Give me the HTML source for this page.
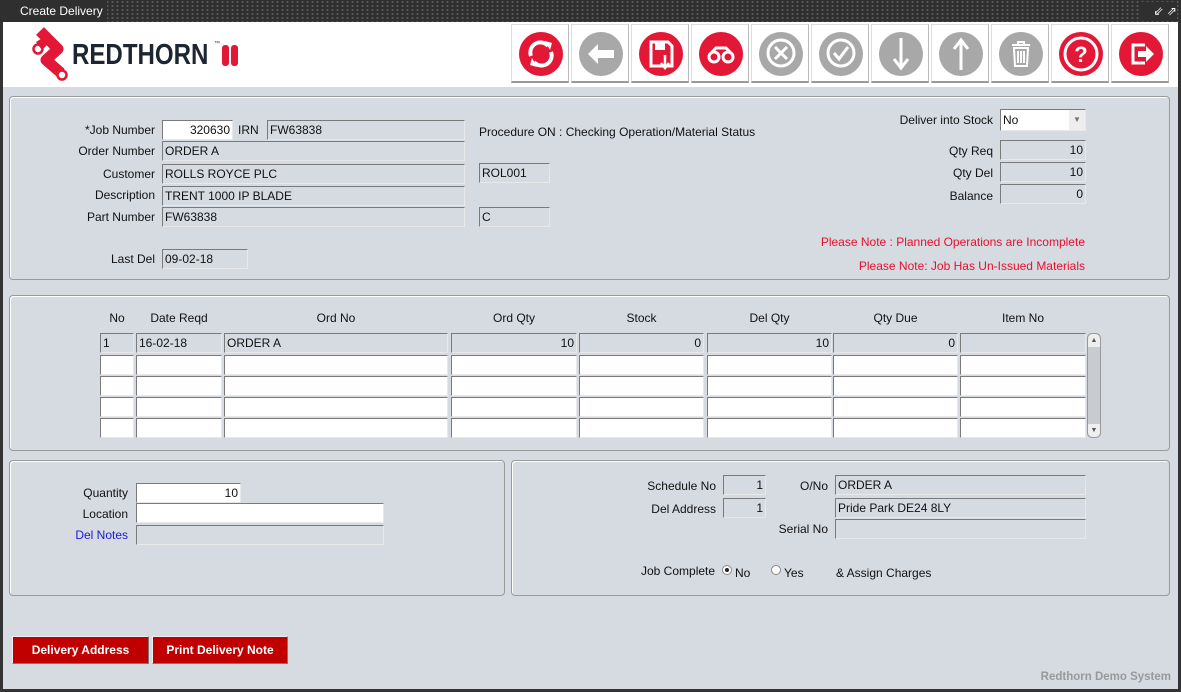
<!DOCTYPE html>
<html><head><meta charset="utf-8">
<style>
*{box-sizing:border-box;margin:0;padding:0}
body{width:1181px;height:692px;overflow:hidden;background:#333;font-family:"Liberation Sans",Arial,sans-serif;font-size:12px;color:#111;position:relative}
#title{position:absolute;left:0;top:0;width:1181px;height:22px;background:#2f2f2f;background-image:radial-gradient(#777 0.8px,transparent 1px);background-size:5px 4px}
#title .t{position:absolute;left:0;top:0;height:22px;background:#2f2f2f;color:#fff;font-size:12px;line-height:22px;padding:0 4px 0 20px}
#title .F{position:absolute;left:3px;top:1px;color:#e0102e;font-size:17px;font-weight:bold;line-height:20px}
#win{position:absolute;left:3px;top:22px;width:1175px;height:667px;background:#d6dae1}
#tb{position:absolute;left:3px;top:22px;width:1175px;height:65px;background:#fff}
.btn{position:absolute;top:24px;width:58px;height:59px;border:1px solid #ddd;border-bottom:2px solid #999;border-right:1px solid #bbb;background:#fff}
.btn svg{position:absolute;left:6px;top:6px}
.p{position:absolute;border:1px solid #9a9a9a;border-radius:4px;box-shadow:1px 1px 0 #fff inset}
.l{position:absolute;white-space:nowrap;text-align:right}
.f{position:absolute;height:20px;background:#d6dae1;border:1px solid;border-color:#7a7a7a #e8e8e8 #e8e8e8 #7a7a7a;padding:0 2px;line-height:18px;white-space:nowrap;overflow:hidden}
.w{background:#fff}
.r{text-align:right}
.h{position:absolute;text-align:center;top:311px}
.red{color:#e8102e}
.rb{position:absolute;top:636px;height:28px;background:#c00000;color:#fff;font-weight:bold;text-align:center;line-height:27px;border:1px solid #eee;border-right-color:#777;border-bottom-color:#777}
</style></head><body>
<div id="title"><span class="F">F</span><span class="t">Create Delivery</span>
<span style="position:absolute;right:4px;top:2px;width:36px;height:18px;background:#2f2f2f;color:#fff;font-size:12px;line-height:18px;text-align:right">⇙ ⇗</span></div>
<div id="win"></div>
<div id="tb"></div>
<!-- logo -->
<svg style="position:absolute;left:0;top:0" width="80" height="90" viewBox="0 0 80 90">
<polyline points="40,31 58,49 46,60 61,73" fill="none" stroke="#e31837" stroke-width="11" stroke-linejoin="round"/>
<circle cx="38" cy="49" r="4.5" fill="#fff" stroke="#e31837" stroke-width="2.5"/>
<path d="M36 42 L44 37 L48 44 L42 50 Z" fill="#e31837"/>
<circle cx="62" cy="75" r="4.5" fill="#fff" stroke="#e31837" stroke-width="2.5"/>
</svg>
<div style="position:absolute;left:72px;top:40px;font-size:29px;font-weight:bold;color:#1d2530;line-height:30px;transform:scaleX(0.83);transform-origin:left">REDTHORN</div>
<div style="position:absolute;left:214px;top:41px;font-size:6px;color:#333">™</div>
<div style="position:absolute;left:222px;top:45px;width:7px;height:21px;background:#e31837;border-radius:3px"></div>
<div style="position:absolute;left:231px;top:45px;width:7px;height:21px;background:#e31837;border-radius:3px"></div>

<!-- toolbar buttons -->
<div class="btn" style="left:511px"><svg width="46" height="46" viewBox="0 0 46 46"><circle cx="23" cy="23" r="22" fill="#e31837"/><path d="M13 25a10 10 0 0 1 17-10" fill="none" stroke="#fff" stroke-width="4"/><path d="M33 21a10 10 0 0 1-17 10" fill="none" stroke="#fff" stroke-width="4"/><path d="M27 10l7 2-2 7z M19 36l-7-2 2-7z" fill="#fff"/></svg></div>
<div class="btn" style="left:571px"><svg width="46" height="46" viewBox="0 0 46 46"><circle cx="23" cy="23" r="22" fill="#a8a8a8"/><path d="M10 23l10-10v6h16v8H20v6z" fill="#fff"/></svg></div>
<div class="btn" style="left:631px"><svg width="46" height="46" viewBox="0 0 46 46"><circle cx="23" cy="23" r="22" fill="#e31837"/><path d="M13 11h17l4 4v20H13z" fill="none" stroke="#fff" stroke-width="3"/><rect x="17" y="12" width="10" height="7" fill="#fff"/><path d="M27 24v12M23 32l4 5 4-5" stroke="#fff" stroke-width="2.5" fill="none"/></svg></div>
<div class="btn" style="left:691px"><svg width="46" height="46" viewBox="0 0 46 46"><circle cx="23" cy="23" r="22" fill="#e31837"/><circle cx="16" cy="26" r="5" fill="none" stroke="#fff" stroke-width="3"/><circle cx="30" cy="26" r="5" fill="none" stroke="#fff" stroke-width="3"/><path d="M14 21l4-4h10l4 4" fill="none" stroke="#fff" stroke-width="3"/></svg></div>
<div class="btn" style="left:751px"><svg width="46" height="46" viewBox="0 0 46 46"><circle cx="23" cy="23" r="22" fill="#a8a8a8"/><circle cx="23" cy="22" r="13" fill="none" stroke="#fff" stroke-width="3"/><path d="M17 16l12 12M29 16L17 28" stroke="#fff" stroke-width="3"/></svg></div>
<div class="btn" style="left:811px"><svg width="46" height="46" viewBox="0 0 46 46"><circle cx="23" cy="23" r="22" fill="#a8a8a8"/><circle cx="23" cy="22" r="13" fill="none" stroke="#fff" stroke-width="3"/><path d="M16 22l5 6 9-12" fill="none" stroke="#fff" stroke-width="3"/></svg></div>
<div class="btn" style="left:871px"><svg width="46" height="46" viewBox="0 0 46 46"><circle cx="23" cy="23" r="22" fill="#a8a8a8"/><path d="M23 7v28M16 28l7 9 7-9" fill="none" stroke="#fff" stroke-width="3"/></svg></div>
<div class="btn" style="left:931px"><svg width="46" height="46" viewBox="0 0 46 46"><circle cx="23" cy="23" r="22" fill="#a8a8a8"/><path d="M23 39V11M16 18l7-9 7 9" fill="none" stroke="#fff" stroke-width="3"/></svg></div>
<div class="btn" style="left:991px"><svg width="46" height="46" viewBox="0 0 46 46"><circle cx="23" cy="23" r="22" fill="#a8a8a8"/><path d="M14 14h18M20 14v-3h6v3M16 17l1 18h12l1-18z M20 20v12M23 20v12M26 20v12" fill="none" stroke="#fff" stroke-width="2"/></svg></div>
<div class="btn" style="left:1051px"><svg width="46" height="46" viewBox="0 0 46 46"><circle cx="23" cy="23" r="22" fill="#e31837"/><circle cx="23" cy="23" r="16" fill="none" stroke="#fff" stroke-width="3"/><text x="23" y="31" text-anchor="middle" fill="#fff" font-size="22" font-weight="bold" font-family="Liberation Sans">?</text></svg></div>
<div class="btn" style="left:1111px"><svg width="46" height="46" viewBox="0 0 46 46"><circle cx="23" cy="23" r="22" fill="#e31837"/><path d="M27 14h-12v18h12" fill="none" stroke="#fff" stroke-width="3"/><path d="M20 20h8v-5l8 8-8 8v-5h-8z" fill="#fff"/></svg></div>

<!-- panels -->
<div class="p" style="left:9px;top:96px;width:1161px;height:184px"></div>
<div class="p" style="left:9px;top:295px;width:1161px;height:156px"></div>
<div class="p" style="left:9px;top:460px;width:496px;height:136px"></div>
<div class="p" style="left:511px;top:460px;width:659px;height:136px"></div>

<!-- panel 1 -->
<div class="l" style="right:1026px;top:123px">*Job Number</div>
<div class="f w r" style="left:162px;top:120px;width:71px">320630</div>
<div class="l" style="left:238px;top:123px">IRN</div>
<div class="f" style="left:267px;top:120px;width:198px">FW63838</div>
<div class="l" style="left:479px;top:125px">Procedure ON : Checking Operation/Material Status</div>
<div class="l" style="right:1026px;top:144px">Order Number</div>
<div class="f" style="left:162px;top:141px;width:303px">ORDER A</div>
<div class="l" style="right:1026px;top:167px">Customer</div>
<div class="f" style="left:162px;top:164px;width:303px">ROLLS ROYCE PLC</div>
<div class="f" style="left:479px;top:163px;width:71px">ROL001</div>
<div class="l" style="right:1026px;top:188px">Description</div>
<div class="f" style="left:162px;top:186px;width:303px">TRENT 1000 IP BLADE</div>
<div class="l" style="right:1026px;top:210px">Part Number</div>
<div class="f" style="left:162px;top:207px;width:303px">FW63838</div>
<div class="f" style="left:479px;top:207px;width:71px">C</div>
<div class="l" style="right:1026px;top:252px">Last Del</div>
<div class="f" style="left:162px;top:249px;width:86px">09-02-18</div>

<div class="l" style="right:188px;top:113px">Deliver into Stock</div>
<div class="f w" style="left:1000px;top:109px;width:86px;height:22px;line-height:20px">No<span style="position:absolute;right:0;top:0;width:16px;height:20px;background:#eee;color:#777;font-size:8px;text-align:center">▼</span></div>
<div class="l" style="right:188px;top:144px">Qty Req</div>
<div class="f r" style="left:1000px;top:140px;width:86px">10</div>
<div class="l" style="right:188px;top:166px">Qty Del</div>
<div class="f r" style="left:1000px;top:162px;width:86px">10</div>
<div class="l" style="right:188px;top:189px">Balance</div>
<div class="f r" style="left:1000px;top:184px;width:86px">0</div>
<div class="l red" style="right:96px;top:235px">Please Note : Planned Operations are Incomplete</div>
<div class="l red" style="right:96px;top:259px">Please Note: Job Has Un-Issued Materials</div>

<!-- table -->
<div class="h" style="left:100px;width:34px">No</div>
<div class="h" style="left:136px;width:86px">Date Reqd</div>
<div class="h" style="left:224px;width:224px">Ord No</div>
<div class="h" style="left:451px;width:126px">Ord Qty</div>
<div class="h" style="left:579px;width:125px">Stock</div>
<div class="h" style="left:707px;width:125px">Del Qty</div>
<div class="h" style="left:833px;width:125px">Qty Due</div>
<div class="h" style="left:960px;width:126px">Item No</div>

<div class="f" style="left:100px;top:333px;width:34px">1</div>
<div class="f" style="left:136px;top:333px;width:86px">16-02-18</div>
<div class="f" style="left:224px;top:333px;width:224px">ORDER A</div>
<div class="f r" style="left:451px;top:333px;width:126px">10</div>
<div class="f r" style="left:579px;top:333px;width:125px">0</div>
<div class="f r" style="left:707px;top:333px;width:125px">10</div>
<div class="f r" style="left:833px;top:333px;width:125px">0</div>
<div class="f" style="left:960px;top:333px;width:126px"></div>

<div class="f w" style="left:100px;top:355px;width:34px"></div><div class="f w" style="left:136px;top:355px;width:86px"></div><div class="f w" style="left:224px;top:355px;width:224px"></div><div class="f w" style="left:451px;top:355px;width:126px"></div><div class="f w" style="left:579px;top:355px;width:125px"></div><div class="f w" style="left:707px;top:355px;width:125px"></div><div class="f w" style="left:833px;top:355px;width:125px"></div><div class="f w" style="left:960px;top:355px;width:126px"></div>
<div class="f w" style="left:100px;top:376px;width:34px"></div><div class="f w" style="left:136px;top:376px;width:86px"></div><div class="f w" style="left:224px;top:376px;width:224px"></div><div class="f w" style="left:451px;top:376px;width:126px"></div><div class="f w" style="left:579px;top:376px;width:125px"></div><div class="f w" style="left:707px;top:376px;width:125px"></div><div class="f w" style="left:833px;top:376px;width:125px"></div><div class="f w" style="left:960px;top:376px;width:126px"></div>
<div class="f w" style="left:100px;top:397px;width:34px"></div><div class="f w" style="left:136px;top:397px;width:86px"></div><div class="f w" style="left:224px;top:397px;width:224px"></div><div class="f w" style="left:451px;top:397px;width:126px"></div><div class="f w" style="left:579px;top:397px;width:125px"></div><div class="f w" style="left:707px;top:397px;width:125px"></div><div class="f w" style="left:833px;top:397px;width:125px"></div><div class="f w" style="left:960px;top:397px;width:126px"></div>
<div class="f w" style="left:100px;top:418px;width:34px"></div><div class="f w" style="left:136px;top:418px;width:86px"></div><div class="f w" style="left:224px;top:418px;width:224px"></div><div class="f w" style="left:451px;top:418px;width:126px"></div><div class="f w" style="left:579px;top:418px;width:125px"></div><div class="f w" style="left:707px;top:418px;width:125px"></div><div class="f w" style="left:833px;top:418px;width:125px"></div><div class="f w" style="left:960px;top:418px;width:126px"></div>
<div style="position:absolute;left:1087px;top:333px;width:14px;height:105px;background:#c8cbd0;border:1px solid #999;border-radius:5px">
<div style="position:absolute;left:0;top:0;width:12px;height:13px;background:#eee;border-radius:5px 5px 0 0;font-size:7px;text-align:center;line-height:13px;color:#555">▲</div>
<div style="position:absolute;left:0;bottom:0;width:12px;height:13px;background:#eee;border-radius:0 0 5px 5px;font-size:7px;text-align:center;line-height:13px;color:#555">▼</div></div>

<!-- panel 3 -->
<div class="l" style="right:1053px;top:486px">Quantity</div>
<div class="f w r" style="left:136px;top:483px;width:105px">10</div>
<div class="l" style="right:1053px;top:507px">Location</div>
<div class="f w" style="left:136px;top:503px;width:248px"></div>
<div class="l" style="right:1053px;top:528px;color:#1a1adc">Del Notes</div>
<div class="f" style="left:136px;top:525px;width:248px"></div>

<!-- panel 4 -->
<div class="l" style="right:465px;top:479px">Schedule No</div>
<div class="f r" style="left:723px;top:475px;width:43px">1</div>
<div class="l" style="right:465px;top:502px">Del Address</div>
<div class="f r" style="left:723px;top:498px;width:43px">1</div>
<div class="l" style="right:353px;top:479px">O/No</div>
<div class="f" style="left:835px;top:475px;width:251px">ORDER A</div>
<div class="f" style="left:835px;top:498px;width:251px">Pride Park DE24 8LY</div>
<div class="l" style="right:353px;top:522px">Serial No</div>
<div class="f" style="left:835px;top:519px;width:251px"></div>
<div class="l" style="left:641px;top:564px">Job Complete</div>
<div style="position:absolute;left:722px;top:565px;width:10px;height:10px;border-radius:50%;background:#fff;border:1px solid #888"><div style="position:absolute;left:2px;top:2px;width:4px;height:4px;border-radius:50%;background:#222"></div></div>
<div class="l" style="left:735px;top:566px">No</div>
<div style="position:absolute;left:771px;top:565px;width:10px;height:10px;border-radius:50%;background:#fff;border:1px solid #888"></div>
<div class="l" style="left:784px;top:566px">Yes</div>
<div class="l" style="left:836px;top:566px">&amp; Assign Charges</div>

<div class="rb" style="left:12px;width:137px">Delivery Address</div>
<div class="rb" style="left:152px;width:136px">Print Delivery Note</div>
<div class="l" style="right:10px;top:671px;color:#999;font-weight:bold;font-size:11.5px">Redthorn Demo System</div>
</body></html>
